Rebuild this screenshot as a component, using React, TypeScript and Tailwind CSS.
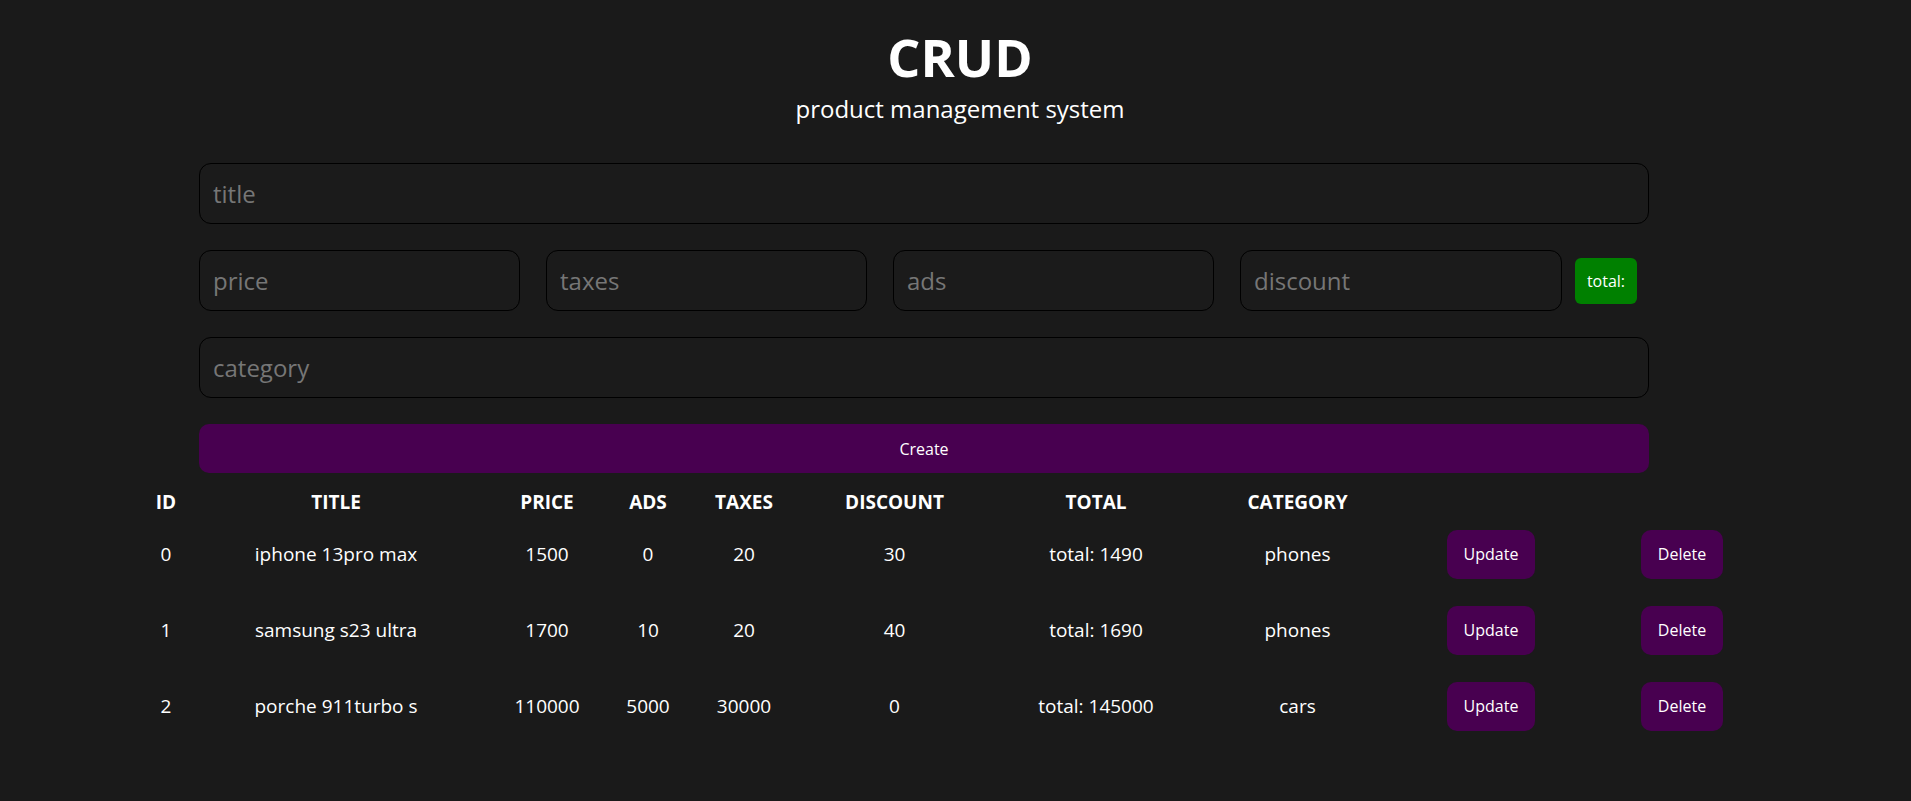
type Product = {
  id: number;
  title: string;
  price: number;
  ads: number;
  taxes: number;
  discount: number;
  category: string;
};

const products: Product[] = [
  { id: 0, title: "iphone 13pro max", price: 1500, ads: 0, taxes: 20, discount: 30, category: "phones" },
  { id: 1, title: "samsung s23 ultra", price: 1700, ads: 10, taxes: 20, discount: 40, category: "phones" },
  { id: 2, title: "porche 911turbo s", price: 110000, ads: 5000, taxes: 30000, discount: 0, category: "cars" },
];

const cols =
  "grid grid-cols-[72px_268px_154px_48px_144px_157px_246px_157px_230px_152px] items-center text-center";

const inputCls =
  "h-[61px] rounded-[12px] border border-black bg-[#1b1b1b] pl-[13px] text-[24px] text-white outline-none placeholder:text-[#767676]";

function total(p: Product) {
  return p.price + p.ads + p.taxes - p.discount;
}

export default function App() {
  return (
    <div className="min-h-[801px] bg-[#1a1a1a] pb-10 text-white [font-family:'Open_Sans',sans-serif]">
      <div className="pl-[9px] pt-[31px] text-center">
        <h1 className="text-[52px] font-bold leading-[52px]">CRUD</h1>
        <p className="mt-[14px] text-[24px] leading-[24px]">product management system</p>
      </div>

      <div className="ml-[199px] mt-[42px] flex w-[1450px] flex-col gap-[26px]">
        <input className={`${inputCls} w-full`} placeholder="title" />
        <div className="flex items-center">
          <input className={`${inputCls} w-[321px]`} placeholder="price" />
          <input className={`${inputCls} ml-[26px] w-[321px]`} placeholder="taxes" />
          <input className={`${inputCls} ml-[26px] w-[321px]`} placeholder="ads" />
          <input className={`${inputCls} ml-[26px] w-[322px]`} placeholder="discount" />
          <span className="ml-[13px] flex h-[46px] w-[62px] items-center justify-center rounded-md bg-[#008000] text-[16px]">
            total:
          </span>
        </div>
        <input className={`${inputCls} w-full`} placeholder="category" />
        <button className="h-[49px] w-full rounded-[10px] bg-[#480050] text-[16px] text-white">Create</button>
      </div>

      <div className="ml-[130px] mt-[15px] text-[19px]">
        <div className={`${cols} h-[28px] font-bold`}>
          <span>ID</span>
          <span>TITLE</span>
          <span>PRICE</span>
          <span>ADS</span>
          <span>TAXES</span>
          <span>DISCOUNT</span>
          <span>TOTAL</span>
          <span>CATEGORY</span>
          <span />
          <span />
        </div>
        {products.map((p) => (
          <div key={p.id} className={`${cols} h-[76px]`}>
            <span>{p.id}</span>
            <span>{p.title}</span>
            <span>{p.price}</span>
            <span>{p.ads}</span>
            <span>{p.taxes}</span>
            <span>{p.discount}</span>
            <span>total: {total(p)}</span>
            <span>{p.category}</span>
            <div className="flex justify-center">
              <button className="h-[49px] rounded-[10px] bg-[#480050] px-[17px] text-[16px] text-white">Update</button>
            </div>
            <div className="flex justify-center">
              <button className="h-[49px] rounded-[10px] bg-[#480050] px-[17px] text-[16px] text-white">Delete</button>
            </div>
          </div>
        ))}
      </div>
    </div>
  );
}
